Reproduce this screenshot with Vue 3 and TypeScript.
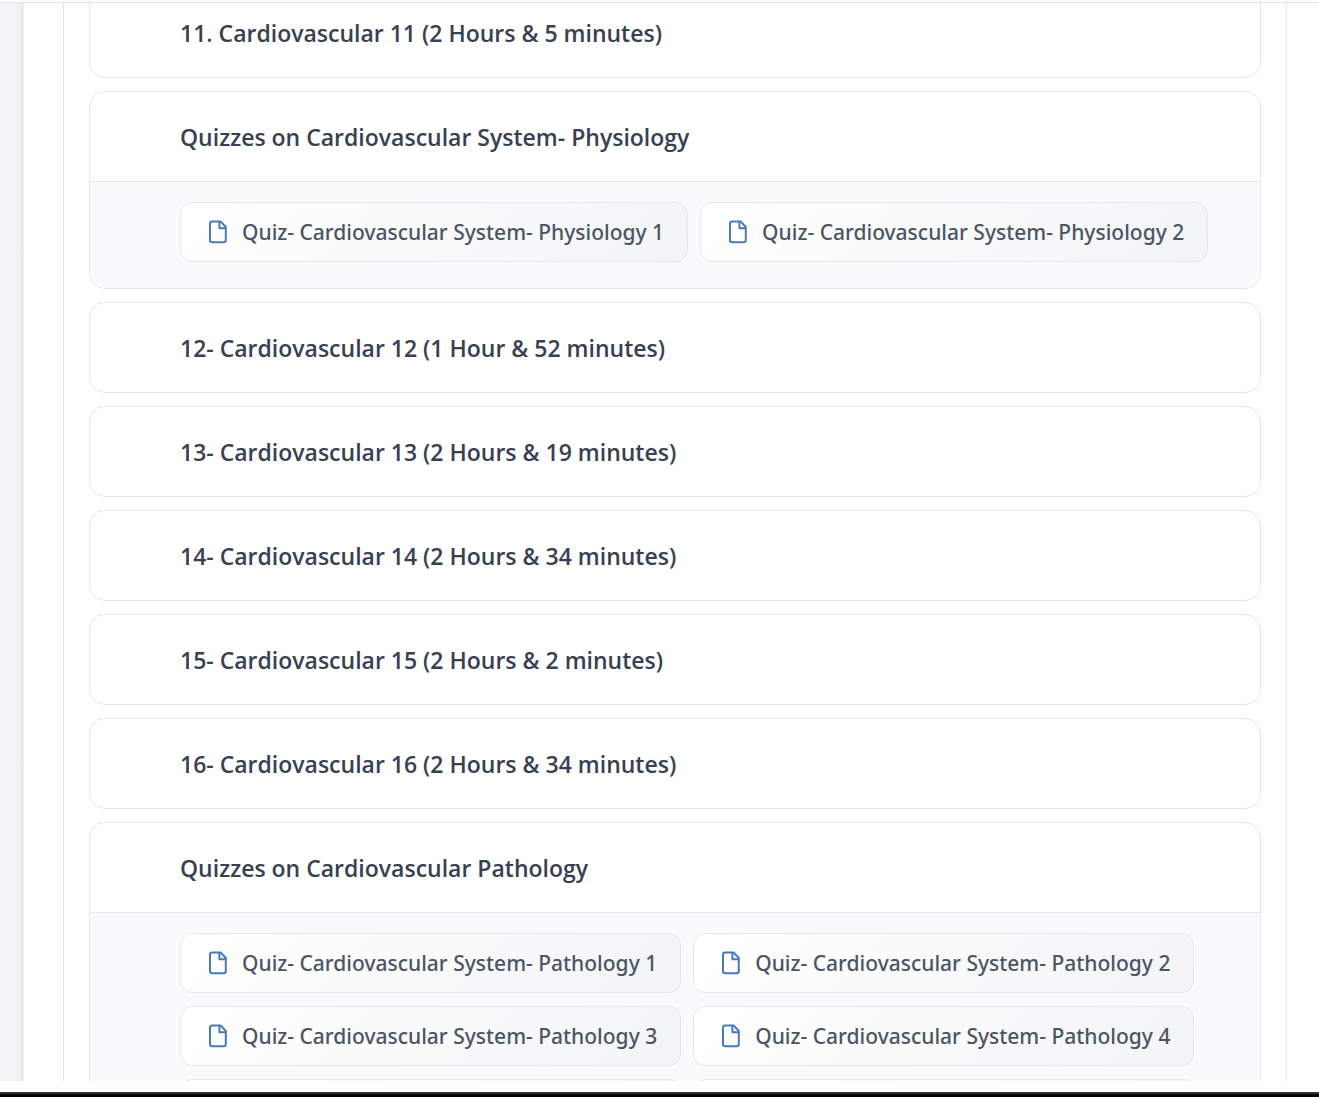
<script setup lang="ts">
interface Section {
  title: string
  quizzes: string[]
  pending?: number
}

const quizNames = (topic: string, count: number): string[] =>
  Array.from({ length: count }, (_, i) => `Quiz- Cardiovascular System- ${topic} ${i + 1}`)

const sections: Section[] = [
  { title: '11. Cardiovascular 11 (2 Hours & 5 minutes)', quizzes: [] },
  { title: 'Quizzes on Cardiovascular System- Physiology', quizzes: quizNames('Physiology', 2) },
  { title: '12- Cardiovascular 12 (1 Hour & 52 minutes)', quizzes: [] },
  { title: '13- Cardiovascular 13 (2 Hours & 19 minutes)', quizzes: [] },
  { title: '14- Cardiovascular 14 (2 Hours & 34 minutes)', quizzes: [] },
  { title: '15- Cardiovascular 15 (2 Hours & 2 minutes)', quizzes: [] },
  { title: '16- Cardiovascular 16 (2 Hours & 34 minutes)', quizzes: [] },
  { title: 'Quizzes on Cardiovascular Pathology', quizzes: quizNames('Pathology', 4), pending: 2 },
]
</script>

<template>
  <div class="page">
    <header class="topbar"></header>
    <div class="body">
      <aside class="rail"></aside>
      <main class="panel">
        <section v-for="s in sections" :key="s.title" class="card">
          <h2 class="title">{{ s.title }}</h2>
          <div v-if="s.quizzes.length" class="quizzes">
            <a v-for="q in s.quizzes" :key="q" class="chip" href="#">
              <svg class="icon" viewBox="0 0 20 24" aria-hidden="true">
                <path d="M4.2 1.4H12.6L17.8 7V20Q17.8 22.3 15.6 22.3H4.2Q2 22.3 2 20V3.6Q2 1.4 4.2 1.4Z" />
                <path d="M11.4 1.6V8.2H17.6" />
              </svg>
              <span>{{ q }}</span>
            </a>
            <!-- Blank chips stand in for quizzes below the fold -->
            <div v-for="n in s.pending ?? 0" :key="n" class="chip blank"></div>
          </div>
        </section>
      </main>
    </div>
    <footer class="bottom"></footer>
  </div>
</template>

<style>
body {
  margin: 0;
  background: #fff;
}
</style>

<style scoped>
.page {
  display: flex;
  flex-direction: column;
  height: 100vh;
  overflow: hidden;
  font-family: "Open Sans", "Noto Sans", sans-serif;
}
.topbar {
  flex: none;
  height: 2px;
  border-bottom: 1px solid #e2e4ec;
}
.body {
  display: flex;
  flex: 1;
  min-height: 0;
  overflow: hidden;
}
.rail {
  flex: none;
  width: 24px;
  background: linear-gradient(to right, #f3f4f6 14px, #eeeff1 20px, #e6e7e8 23px, #f4f4f4 24px);
}
.panel {
  display: flex;
  flex: 1;
  flex-direction: column;
  gap: 13px;
  height: max-content;
  margin: -16px 32px 0 39px;
  padding: 0 25px;
  border: solid #e5e7eb;
  border-width: 0 1px;
}
.card {
  border: 1px solid #e5e7eb;
  border-radius: 16px;
  overflow: hidden;
}
.title {
  margin: 0;
  padding: 27px 90px 26px;
  font-size: 23px;
  font-weight: 600;
  line-height: 36px;
  color: #374151;
}
.quizzes {
  display: flex;
  flex-wrap: wrap;
  gap: 13px 12px;
  padding: 20px 24px 26px 90px;
  border-top: 1px solid #e5e7eb;
  background: #f9fafb;
}
.chip {
  display: flex;
  align-items: center;
  gap: 14px;
  padding: 13px 23px 13px 27px;
  border: 1px solid #e5e7eb;
  border-radius: 12px;
  background: linear-gradient(135deg, #fff, #f3f4f6);
  font-family: "Noto Sans", "Open Sans", sans-serif;
  font-size: 21px;
  font-weight: 500;
  line-height: 32px;
  color: #4b5563;
  text-decoration: none;
  white-space: nowrap;
}
.blank {
  flex: 0 1 450px;
  min-height: 32px;
}
.icon {
  width: 20px;
  height: 24px;
  fill: none;
  stroke: #4a7ab5;
  stroke-width: 2;
  stroke-linejoin: round;
}
.bottom {
  flex: none;
  height: 3px;
  margin-top: 11px;
  border-top: 2px solid #333;
  background: #050507;
}
</style>
